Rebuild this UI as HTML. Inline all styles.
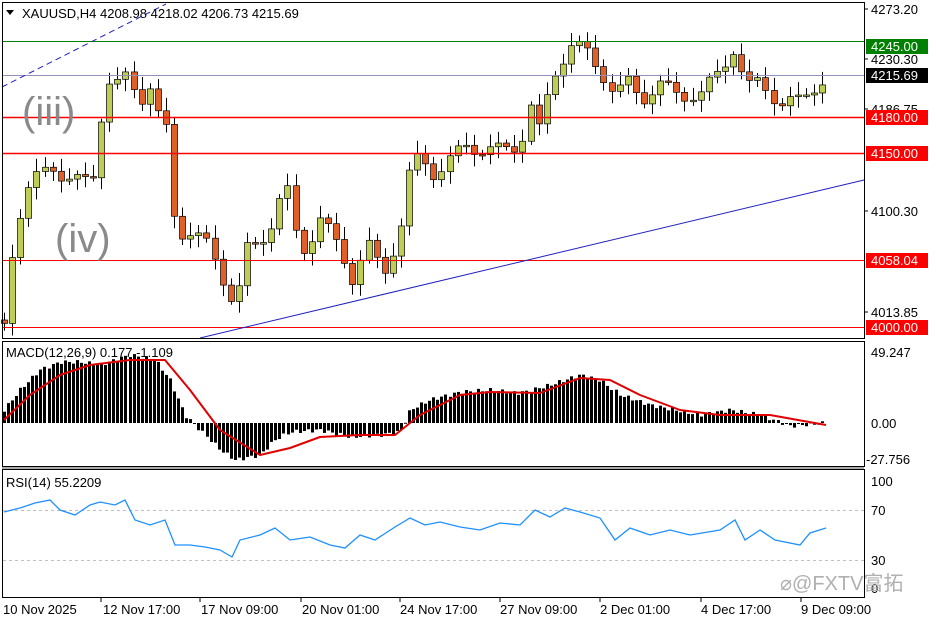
<!DOCTYPE html>
<html><head><meta charset="utf-8">
<style>
html,body{margin:0;padding:0;background:#fff;width:936px;height:624px;overflow:hidden;font-family:"Liberation Sans",sans-serif}
svg text{font-family:"Liberation Sans","Noto Sans CJK SC",sans-serif}
</style></head><body>
<svg id="s" width="936" height="624" xmlns="http://www.w3.org/2000/svg">
<rect x="0" y="0" width="936" height="624" fill="#fff"/>
<g id="candles"></g>
<line x1="2" y1="41.5" x2="864" y2="41.5" stroke="#008000" stroke-width="1"/>
<line x1="2" y1="75.5" x2="864" y2="75.5" stroke="#9090b8" stroke-width="1"/>
<line x1="2" y1="117.5" x2="864" y2="117.5" stroke="#ff0000" stroke-width="1.5"/>
<line x1="2" y1="153.5" x2="864" y2="153.5" stroke="#ff0000" stroke-width="1.5"/>
<line x1="2" y1="260.5" x2="864" y2="260.5" stroke="#ff0000" stroke-width="1"/>
<line x1="2" y1="327.5" x2="864" y2="327.5" stroke="#ff0000" stroke-width="1"/>
<line x1="200" y1="338" x2="864" y2="180" stroke="#2020c0" stroke-width="1"/>
<line x1="2" y1="87" x2="166" y2="4" stroke="#2020c0" stroke-width="1" stroke-dasharray="6,4"/>
<text x="22" y="125" font-size="40" fill="#8a8a8a">(iii)</text>
<text x="55" y="252" font-size="40" fill="#8a8a8a">(iv)</text>
<polygon points="6,10 14,10 10,15" fill="#000"/>
<text x="22" y="18" font-size="13" fill="#000">XAUUSD,H4  4208.98 4218.02 4206.73 4215.69</text>
<rect x="2.5" y="2.5" width="862" height="336" fill="none" stroke="#000"/>
<rect x="2.5" y="341.5" width="862" height="125" fill="none" stroke="#000"/>
<rect x="2.5" y="469.5" width="862" height="128" fill="none" stroke="#000"/>
<line x1="2" y1="468" x2="864" y2="468" stroke="#555" stroke-width="1"/>
<g id="macd"></g>
<text x="6" y="357" font-size="13" fill="#000">MACD(12,26,9) 0.177 -1.109</text>
<line x1="3" y1="510.5" x2="864" y2="510.5" stroke="#c0c0c0" stroke-dasharray="3,3"/>
<line x1="3" y1="560.5" x2="864" y2="560.5" stroke="#c0c0c0" stroke-dasharray="3,3"/>
<g id="rsi"></g>
<text x="6" y="487" font-size="13" fill="#000">RSI(14) 55.2209</text>
<g font-size="13" fill="#000">
<text x="871" y="14">4273.20</text>
<text x="871" y="64">4230.30</text>
<text x="871" y="114">4186.75</text>
<text x="871" y="216">4100.30</text>
<text x="871" y="317">4013.85</text>
<text x="871" y="357">49.247</text>
<text x="871" y="428">0.00</text>
<text x="866" y="464">-27.756</text>
<text x="871" y="486">100</text>
<text x="871" y="515">70</text>
<text x="871" y="565">30</text>
<text x="871" y="593">0</text>
</g>
<g stroke="#000"><line x1="865" y1="9" x2="868" y2="9"/><line x1="865" y1="59" x2="868" y2="59"/><line x1="865" y1="109" x2="868" y2="109"/><line x1="865" y1="211" x2="868" y2="211"/><line x1="865" y1="312" x2="868" y2="312"/></g>
<rect x="866" y="39" width="62" height="15" fill="#008000"/><text x="871" y="51" font-size="13" fill="#fff">4245.00</text>
<rect x="866" y="68" width="62" height="15" fill="#000"/><text x="871" y="80" font-size="13" fill="#fff">4215.69</text>
<rect x="866" y="110" width="62" height="15" fill="#f00"/><text x="871" y="122" font-size="13" fill="#fff">4180.00</text>
<rect x="866" y="146" width="62" height="15" fill="#f00"/><text x="871" y="158" font-size="13" fill="#fff">4150.00</text>
<rect x="866" y="253" width="62" height="15" fill="#f00"/><text x="871" y="265" font-size="13" fill="#fff">4058.04</text>
<rect x="866" y="320" width="62" height="15" fill="#f00"/><text x="871" y="332" font-size="13" fill="#fff">4000.00</text>
<text x="780" y="590" font-size="20" fill="#b0b0b0">⌀@FXTV富拓</text>
<g font-size="13" fill="#000">
<text x="3" y="614">10 Nov 2025</text>
<text x="103" y="614">12 Nov 17:00</text>
<text x="201" y="614">17 Nov 09:00</text>
<text x="302" y="614">20 Nov 01:00</text>
<text x="400" y="614">24 Nov 17:00</text>
<text x="500" y="614">27 Nov 09:00</text>
<text x="600" y="614">2 Dec 01:00</text>
<text x="701" y="614">4 Dec 17:00</text>
<text x="801" y="614">9 Dec 09:00</text>
</g>
<g stroke="#000"><line x1="101" y1="598" x2="101" y2="602"/><line x1="200" y1="598" x2="200" y2="602"/><line x1="301" y1="598" x2="301" y2="602"/><line x1="400" y1="598" x2="400" y2="602"/><line x1="500" y1="598" x2="500" y2="602"/><line x1="600" y1="598" x2="600" y2="602"/><line x1="701" y1="598" x2="701" y2="602"/><line x1="801" y1="598" x2="801" y2="602"/></g>
</svg>
<script>
(function(){
var NS="http://www.w3.org/2000/svg";
function interp(pts,x){for(var i=0;i<pts.length-1;i++){if(x>=pts[i][0]&&x<=pts[i+1][0]){var t=(x-pts[i][0])/(pts[i+1][0]-pts[i][0]);return pts[i][1]+t*(pts[i+1][1]-pts[i][1]);}}return x<pts[0][0]?pts[0][1]:pts[pts.length-1][1];}
function el(t,a,p){var e=document.createElementNS(NS,t);for(var k in a)e.setAttribute(k,a[k]);p.appendChild(e);return e;}
var price=[[4,320],[10,262],[15,235],[25,200],[40,170],[50,160],[65,185],[80,180],[95,170],[105,85],[115,90],[128,70],[140,100],[150,90],[160,125],[170,130],[175,230],[190,235],[210,245],[220,270],[230,300],[240,290],[245,250],[260,240],[275,220],[285,180],[295,230],[305,250],[320,220],[335,240],[345,260],[355,285],[365,240],[375,260],[385,270],[400,230],[410,170],[420,155],[435,175],[450,160],[465,145],[480,150],[500,150],[520,145],[530,105],[540,135],[550,80],[570,45],[585,50],[600,70],[615,95],[630,80],[640,100],[660,85],[680,95],[700,95],[720,70],[735,45],[745,90],[760,80],[780,105],[800,100],[810,88],[826,80]];
var g=document.getElementById("candles");
var prev=interp(price,0);
for(var x=4;x<=826;x+=8.1){
 var c=interp(price,x)+Math.sin(x*1.7)*7;
 var o=prev;var hi=Math.min(o,c)-3-Math.abs(Math.sin(x*0.9))*10;var lo=Math.max(o,c)+3+Math.abs(Math.cos(x*1.3))*9;
 var xr=Math.round(x)+0.5;
 el("line",{x1:xr,y1:hi,x2:xr,y2:lo,stroke:"#000","stroke-width":1},g);
 var tp=Math.min(o,c),h=Math.max(Math.abs(o-c),1.5);
 el("rect",{x:xr-3,y:tp,width:6,height:h,fill:(c<o?"#bfcc55":"#e0602a"),stroke:"#000","stroke-width":0.7},g);
 prev=c;
}
var hist=[[4,410],[20,390],[40,370],[60,362],[80,362],[100,365],[130,355],[155,360],[170,380],[185,415],[200,430],[220,450],[235,460],[260,455],[275,440],[290,432],[320,430],[350,437],[380,435],[400,432],[410,410],[430,400],[460,392],[490,390],[520,393],[550,385],[580,375],[600,380],[620,395],[650,405],[700,415],[730,410],[760,415],[790,426],[826,423]];
var m=document.getElementById("macd");
for(var x=4;x<=826;x+=4.05){var y=interp(hist,x)+Math.sin(x*2.1)*2;var xr=Math.round(x)-1;
 var y0=423;el("rect",{x:xr,y:Math.min(y,y0),width:3,height:Math.max(Math.abs(y-y0),1),fill:"#000"},m);}
var sig=[[4,420],[30,395],[60,375],[90,365],[130,360],[165,360],[190,390],[220,430],[260,455],[290,448],[320,437],[360,435],[395,435],[420,415],[460,395],[490,392],[540,393],[580,378],[610,380],[640,395],[680,410],[720,415],[770,415],[826,425]];
el("polyline",{points:sig.map(function(p){return p.join(",")}).join(" "),fill:"none",stroke:"#e00000","stroke-width":2,"stroke-linejoin":"round"},m);
var rsi=[[4,512],[20,508],[35,503],[50,500],[60,510],[75,515],[90,505],[100,502],[115,505],[125,500],[135,520],[150,525],[165,520],[175,545],[190,545],[205,547],[220,550],[232,557],[240,540],[260,535],[275,528],[290,540],[310,537],[330,545],[345,548],[360,535],[375,540],[395,527],[410,518],[425,525],[440,522],[460,527],[480,530],[500,523],[520,525],[535,510],[550,517],[565,508],[580,512],[600,518],[615,540],[630,528],[650,535],[670,530],[690,535],[720,530],[735,520],[745,540],[760,530],[775,540],[800,545],[810,533],[826,528]];
el("polyline",{points:rsi.map(function(p){return p.join(",")}).join(" "),fill:"none",stroke:"#1e90ff","stroke-width":1.3},document.getElementById("rsi"));
})();
</script>
</body></html>
